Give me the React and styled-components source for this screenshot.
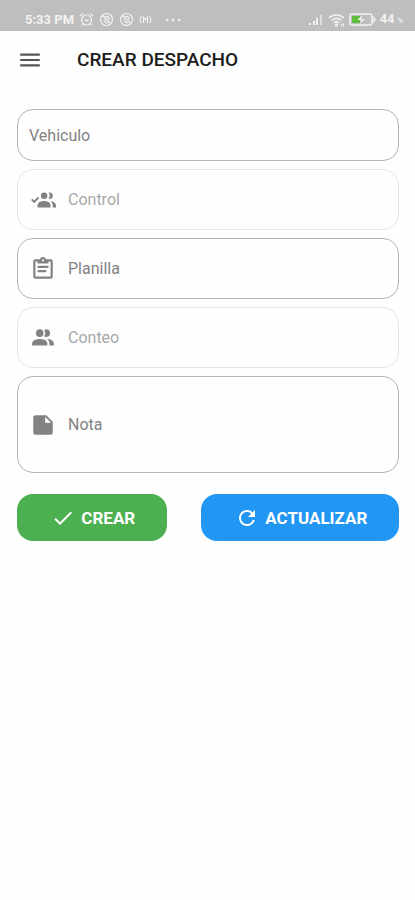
import React, { useState } from 'react';
import styled, { createGlobalStyle } from 'styled-components';
import { MdMenu, MdCheck, MdRefresh } from 'react-icons/md';

const iconPaths = {
  control:
    'M19,17V19H7V17S7,13 13,13S19,17 19,17M16,8A3,3 0 1,0 13,11A3,3 0 0,0 16,8M19.2,13.06A5.6,5.6 0 0,1 21,17V19H24V17S24,13.55 19.2,13.06M18,5A2.91,2.91 0 0,0 17.11,5.14A5,5 0 0,1 17.11,10.86A2.91,2.91 0 0,0 18,11A3,3 0 0,0 18,5M7.34,8.92L8.5,10.33L3.75,15.08L1,12.08L2.16,10.92L3.75,12.5L7.34,8.92',
  planilla:
    'M19,3H14.82C14.4,1.84 13.3,1 12,1C10.7,1 9.6,1.84 9.18,3H5A2,2 0 0,0 3,5V19A2,2 0 0,0 5,21H19A2,2 0 0,0 21,19V5A2,2 0 0,0 19,3M12,3A1,1 0 0,1 13,4A1,1 0 0,1 12,5A1,1 0 0,1 11,4A1,1 0 0,1 12,3M7,7H17V5H19V19H5V5H7V7M17,11H7V9H17V11M15,15H7V13H15V15Z',
  conteo:
    'M16,17V19H2V17S2,13 9,13 16,17 16,17M12.5,7.5A3.5,3.5 0 1,0 9,11A3.5,3.5 0 0,0 12.5,7.5M15.94,13A5.32,5.32 0 0,1 18,17V19H22V17S22,13.37 15.94,13M15,4A3.39,3.39 0 0,0 13.07,4.59A5,5 0 0,1 13.07,10.41A3.39,3.39 0 0,0 15,11A3.5,3.5 0 0,0 15,4Z',
  nota:
    'M14,10V4.5L19.5,10M5,3C3.89,3 3,3.89 3,5V19A2,2 0 0,0 5,21H19A2,2 0 0,0 21,19V9L15,3H5Z',
};

function FieldIcon({ name }) {
  return (
    <svg width="26" height="26" viewBox="0 0 24 24" fill="currentColor" aria-hidden="true">
      <path d={iconPaths[name]} />
    </svg>
  );
}

function AlarmIcon() {
  return (
    <svg width="15" height="15" viewBox="0 0 15 15" fill="none" stroke="currentColor" strokeWidth="1.2" aria-hidden="true">
      <circle cx="7.5" cy="8" r="5" />
      <path d="M1 4L4 1.5M14 4L11 1.5M3.8 12L2.8 13.5M11.2 12L12.2 13.5M5.5 7.5L7.5 9L9.5 7.5" />
    </svg>
  );
}

function MutedIcon() {
  return (
    <svg width="15" height="15" viewBox="0 0 15 15" fill="none" stroke="currentColor" strokeWidth="1.2" aria-hidden="true">
      <circle cx="7.5" cy="7.5" r="6" />
      <path d="M3.5 3.5L11.5 11.5M5 7.5C5 10 7 11 9 10.5M6 4.6C8.5 3.8 10.5 5.5 10 8" />
    </svg>
  );
}

function CastIcon() {
  return (
    <svg width="13" height="11" viewBox="0 0 13 11" fill="none" stroke="currentColor" strokeWidth="1.1" aria-hidden="true">
      <path d="M2.5 2C1 4 1 7 2.5 9M10.5 2C12 4 12 7 10.5 9M4.5 9V3L6.5 6L8.5 3V9" />
    </svg>
  );
}

function DotsIcon() {
  return (
    <svg width="24" height="4" viewBox="0 0 24 4" fill="currentColor" aria-hidden="true">
      <circle cx="10" cy="2" r="1.300" />
      <circle cx="16" cy="2" r="1.300" />
      <circle cx="22" cy="2" r="1.300" />
    </svg>
  );
}

function SignalIcon() {
  return (
    <svg width="16" height="12" viewBox="0 0 16 12" fill="currentColor" aria-hidden="true">
      <path d="M1 9h2v2H1zM5 7h2v4H5zM8 4h2v7H8z" />
      <path d="M12 1h2v10h-2z" opacity="0.6" />
    </svg>
  );
}

function WifiIcon() {
  return (
    <svg width="17" height="14" viewBox="0 0 17 14" fill="none" stroke="currentColor" strokeWidth="1.6" aria-hidden="true">
      <path d="M1 5C5 1 12 1 16 5M3.5 7.5C6.5 5 10.5 5 13.500 7.5M6 10C7.5 8.7 9.5 8.7 11 10" />
      <circle cx="8.5" cy="12" r="0.8" />
      <path d="M13.500 10.5V13.500M15.500 10.5V13.500" strokeWidth="1" />
    </svg>
  );
}

function BatteryIcon() {
  return (
    <svg width="27" height="13" viewBox="0 0 27 13" fill="none" aria-hidden="true">
      <rect x="1" y="1" width="22" height="11" rx="2" stroke="currentColor" strokeWidth="1.6" />
      <path d="M24 4L26 6.5L24 9" stroke="currentColor" strokeWidth="1.6" />
      <rect x="3" y="3" width="8" height="7" fill="#5fbf3a" />
      <path d="M13 2L8.5 7H12L11 11L15.500 6H12z" fill="currentColor" />
    </svg>
  );
}

function Field({ id, label, icon, disabled, multiline }) {
  const [value, setValue] = useState('');
  const props = { id, value, disabled, placeholder: label, onChange: e => setValue(e.target.value) };

  return (
    <FieldBox htmlFor={id} aria-label={label} $disabled={disabled} $size={multiline ? 'tall' : icon ? 'normal' : 'small'}>
      {icon && <FieldIcon name={icon} />}
      {multiline ? <TextArea rows={1} {...props} /> : <Input type="text" {...props} />}
    </FieldBox>
  );
}

function App() {
  return (
    <Container>
      <GlobalStyle />
      <StatusBar>
        <StatusGroup $gap={5}>
          <StatusText>5:33 PM</StatusText>
          <AlarmIcon />
          <MutedIcon />
          <MutedIcon />
          <CastIcon />
          <DotsIcon />
        </StatusGroup>
        <StatusGroup $gap={4}>
          <SignalIcon />
          <WifiIcon />
          <BatteryIcon />
          <StatusText>44 <Percent>%</Percent></StatusText>
        </StatusGroup>
      </StatusBar>
      <Header>
        <MenuButton type="button" aria-label="Menu">
          <MdMenu size={26} />
        </MenuButton>
        <Title>CREAR DESPACHO</Title>
      </Header>
      <Form onSubmit={e => e.preventDefault()}>
        <Field id="vehiculo" label="Vehiculo" />
        <Field id="control" label="Control" icon="control" disabled />
        <Field id="planilla" label="Planilla" icon="planilla" />
        <Field id="conteo" label="Conteo" icon="conteo" disabled />
        <Field id="nota" label="Nota" icon="nota" multiline />
        <Actions>
          <Button type="submit" $color="#4caf50" $grow={3}>
            <MdCheck size={24} />
            CREAR
          </Button>
          <Button type="button" $color="#2196f3" $grow={4}>
            <MdRefresh size={24} />
            ACTUALIZAR
          </Button>
        </Actions>
      </Form>
    </Container>
  );
}

const GlobalStyle = createGlobalStyle`
  * {
    box-sizing: border-box;
  }

  body {
    margin: 0;
    background-color: #fefefe;
    font-family: Roboto, "Liberation Sans", sans-serif;
  }

  svg {
    flex-shrink: 0;
  }
`;

const fieldHeights = { small: '52px', normal: '61px', tall: '97px' };

const Container = styled.div`
  display: flex;
  flex-direction: column;
`;

const StatusBar = styled.div`
  display: flex;
  justify-content: space-between;
  align-items: center;
  height: 31px;
  padding: 8px 12px 0 25px;
  background-color: #bebebe;
  color: #f2f2f2;
`;

const StatusGroup = styled.div`
  display: flex;
  align-items: center;
  gap: ${({ $gap }) => $gap}px;
`;

const StatusText = styled.span`
  font-size: 13px;
  font-weight: 700;
  line-height: 16px;
`;

const Percent = styled.small`
  font-size: 7px;
`;

const Header = styled.header`
  display: flex;
  align-items: center;
  gap: 34px;
  height: 58px;
  padding: 0 17px;
`;

const MenuButton = styled.button`
  display: flex;
  padding: 0;
  border: none;
  background: none;
  color: #555;
`;

const Title = styled.h1`
  margin: 0;
  font-size: 19px;
  font-weight: 500;
  line-height: 24px;
  color: #1c1c1c;
`;

const Form = styled.form`
  display: flex;
  flex-direction: column;
  gap: 8px;
  padding: 20px 16px 20px 17px;
`;

const FieldBox = styled.label`
  display: flex;
  align-items: center;
  gap: 12px;
  height: ${({ $size }) => fieldHeights[$size]};
  padding: ${({ $size }) => ($size === 'small' ? '2px 11px 0' : '1px 12px 0')};
  border: 1px solid ${({ $disabled }) => ($disabled ? '#e4e4e4' : '#b4b4b4')};
  border-radius: 16px;
  color: #828282;
`;

const Input = styled.input`
  flex: 1;
  min-width: 0;
  padding: 0;
  border: none;
  outline: none;
  background: none;
  font-family: inherit;
  font-size: 16px;
  line-height: 20px;
  color: #333;

  &::placeholder {
    color: ${({ disabled }) => (disabled ? '#a8a8a8' : '#828282')};
    opacity: 1;
  }
`;

const TextArea = styled(Input).attrs({ as: 'textarea' })`
  height: 20px;
  resize: none;
`;

const Actions = styled.div`
  display: flex;
  gap: 34px;
  margin-top: 13px;
`;

const Button = styled.button`
  display: flex;
  flex: ${({ $grow }) => $grow} 1 0;
  justify-content: center;
  align-items: center;
  gap: 6px;
  height: 47px;
  padding: 0 0 0 3px;
  border: none;
  border-radius: 16px;
  background-color: ${({ $color }) => $color};
  color: #fff;
  font-family: inherit;
  font-size: 17px;
  font-weight: 700;
`;

export default App;
